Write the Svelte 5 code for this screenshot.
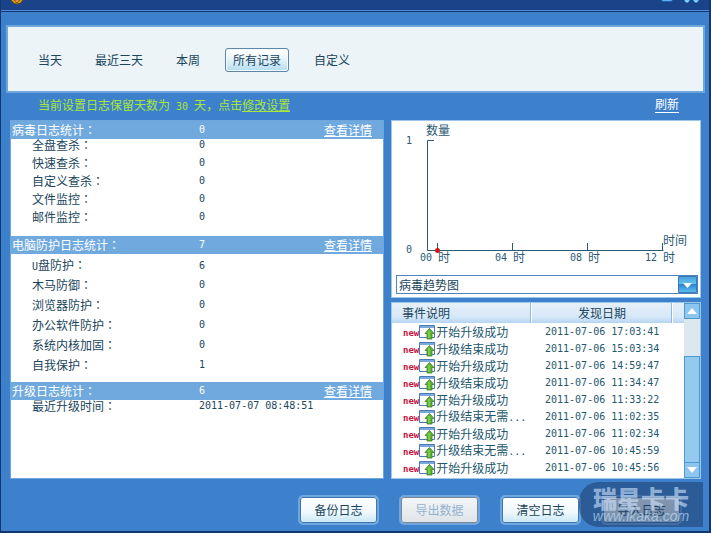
<script>
  const tabs = ['当天', '最近三天', '本周', '所有记录', '自定义'];
  let active = $state('所有记录');
  let chartType = $state('病毒趋势图');

  const sections = [
    {
      title: '病毒日志统计', total: '0', kind: 'virus',
      rows: [['全盘查杀', '0'], ['快速查杀', '0'], ['自定义查杀', '0'], ['文件监控', '0'], ['邮件监控', '0']]
    },
    {
      title: '电脑防护日志统计', total: '7', kind: 'guard',
      rows: [['U盘防护', '6'], ['木马防御', '0'], ['浏览器防护', '0'], ['办公软件防护', '0'], ['系统内核加固', '0'], ['自我保护', '1']]
    },
    {
      title: '升级日志统计', total: '6', kind: 'upgrade',
      rows: [['最近升级时间', '2011-07-07 08:48:51']]
    }
  ];

  const events = [
    ['开始升级成功', '17:03:41'],
    ['升级结束成功', '15:03:34'],
    ['开始升级成功', '14:59:47'],
    ['升级结束成功', '11:34:47'],
    ['开始升级成功', '11:33:22'],
    ['升级结束无需...', '11:02:35'],
    ['开始升级成功', '11:02:34'],
    ['升级结束无需...', '10:45:59'],
    ['开始升级成功', '10:45:56']
  ];

  const ticks = [
    { x: 45, label: '00' },
    { x: 120, label: '04' },
    { x: 195, label: '08' },
    { x: 270, label: '12' }
  ];

  const actions = [
    { label: '备份日志' },
    { label: '导出数据', disabled: true },
    { label: '清空日志' },
    { label: '导入日志' }
  ];

  // Splits a string into half-width and full-width runs.
  const runs = (s) => s.match(/[\x20-\x7e]+|[^\x20-\x7e]+/g) ?? [];
</script>

{#snippet mixed(s)}{#each runs(s) as r}{#if /^[\x20-\x7e]/.test(r)}<span class="half">{r}</span>{:else}{r}{/if}{/each}{/snippet}

<div class="window">
  <header class="titlebar">
    <svg class="badge" width="14" height="10" viewBox="0 0 14 10" aria-hidden="true">
      <circle cx="7" cy="-2" r="6" fill="#d99a1c" stroke="#6b4a10" />
      <path d="M4 0l2 1.500M10 0l-2 1.500M6 2.500h2" stroke="#7a5310" fill="none" />
    </svg>
    <svg class="controls" width="40" height="10" viewBox="0 0 40 10" aria-hidden="true">
      <path d="M1 -1h10v2H1z" fill="#8be3ff" stroke="#2b7cd6" />
      <path d="M23 0h6l-2 2.500h-2zM32 0h6l-2 2.500h-2z" fill="#8be3ff" stroke="#2b7cd6" stroke-width=".5" />
    </svg>
  </header>

  <nav class="tabs" aria-label="时间范围">
    {#each tabs as t}
      <button class="tab" class:active={t === active} onclick={() => (active = t)}>{t}</button>
    {/each}
  </nav>

  <div class="notice">
    <p>当前设置日志保留天数为<span class="half">{' 30 '}</span>天<span class="comma">，</span>点击<a href="#settings">修改设置</a></p>
    <a class="refresh" href="#refresh">刷新</a>
  </div>

  <main>
    <section class="stats">
      {#each sections as s}
        <div class="head">
          <h2>{s.title}<span class="colon">：</span></h2>
          <span class="half">{s.total}</span>
          <a href="#{s.kind}">查看详情</a>
        </div>
        <dl class={s.kind}>
          {#each s.rows as [name, value]}
            <div>
              <dt>{@render mixed(name)}<span class="colon">：</span></dt>
              <dd class="half">{value}</dd>
            </div>
          {/each}
        </dl>
      {/each}
    </section>

    <div class="side">
      <section class="trend">
        <svg class="chart" viewBox="0 0 308 154" preserveAspectRatio="xMinYMin meet">
          <path class="axis" d="M42 19.500h-6.500v110h236" />
          {#each ticks as t}
            <path class="axis" d="M{t.x}.5 129v-7" />
            <text class="num" x={t.x - 17} y="140">{t.label}</text>
            <text x={t.x + 1} y="141">时</text>
          {/each}
          <text x="34" y="14">数量</text>
          <text x="271" y="124">时间</text>
          <text class="num" x="14" y="23">1</text>
          <text class="num" x="14" y="132">0</text>
          <circle cx="45.500" cy="129.500" r="2.500" fill="#d01515" />
        </svg>
        <div class="picker">
          <select aria-label="趋势图类型" bind:value={chartType}>
            <option>病毒趋势图</option>
          </select>
          <svg class="drop" viewBox="0 0 19 17" aria-hidden="true">
            <defs>
              <linearGradient id="dropfill" x2="0" y2="1">
                <stop offset="0" stop-color="#4a9fdc" />
                <stop offset=".5" stop-color="#62c4ee" />
                <stop offset=".5" stop-color="#2f83cf" />
                <stop offset="1" stop-color="#5ec3ef" />
              </linearGradient>
            </defs>
            <path d="M.5.5h18v16H.5z" fill="url(#dropfill)" stroke="#3a78bb" />
            <path d="M5 7h9l-4.500 5z" fill="#fff" />
          </svg>
        </div>
      </section>

      <section class="events">
        <table>
          <thead>
            <tr><th>事件说明</th><th>发现日期</th><th aria-label="其他"></th></tr>
          </thead>
          <tbody>
            {#each events as [title, time]}
              <tr>
                <td>
                  <div class="event">
                    <b>new</b>
                    <svg width="16" height="16" viewBox="0 0 16 16" aria-hidden="true">
                      <path d="M.5 1.500h15v12H.5z" fill="#fff" stroke="#4c79b4" />
                      <path d="M1 2h14v2H1z" fill="#79a8dd" />
                      <path d="M10.500 4.500L15 9.500h-2v5.500H8V9.500H6z" fill="#5cb32e" stroke="#3b7f2a" stroke-width=".8" />
                      <path d="M10 7v7" stroke="#9be069" />
                    </svg>
                    <span>{@render mixed(title)}</span>
                  </div>
                </td>
                <td class="half">2011-07-06 {time}</td>
                <td></td>
              </tr>
            {/each}
          </tbody>
        </table>
        <div class="scroll">
          <button aria-label="向上滚动"><svg width="10" height="6" viewBox="0 0 10 6"><path d="M0 6l5-6 5 6z" fill="#fff" /></svg></button>
          <div class="track"><div class="thumb"></div></div>
          <button aria-label="向下滚动"><svg width="10" height="6" viewBox="0 0 10 6"><path d="M0 0l5 6 5-6z" fill="#fff" /></svg></button>
        </div>
      </section>
    </div>
  </main>

  <footer>
    {#each actions as a}
      <button class="action" disabled={a.disabled}>{a.label}</button>
    {/each}
    <div class="watermark">
      <strong>瑞星卡卡</strong>
      <em>www.ikaka.com</em>
    </div>
  </footer>
</div>

<style>
  :global(body) { background: #3d80cb; }
  .window, .window :is(button, select) {
    font-family: "Noto Sans CJK SC", sans-serif;
    font-size: 12px;
    line-height: 12px;
    color: #1a455c;
  }
  .window {
    box-sizing: border-box;
    min-height: 100vh;
    display: flex;
    flex-direction: column;
    background: #3d80cb;
    border: solid #12366f;
    border-width: 0 2px 2px 1px;
  }
  .half { font-family: "DejaVu Sans Mono", monospace; font-size: 10px; line-height: 10px; white-space: pre; }
  .colon { font-family: "Noto Sans CJK JP", sans-serif; }
  h2, p, dl, dd { margin: 0; }
  a { color: inherit; }
  button { cursor: pointer; }

  .titlebar {
    height: 10px;
    display: flex;
    justify-content: space-between;
    padding: 0 8px 0 9px;
    background: #1b4389;
    border-bottom: 1px solid #4d8bd8;
    box-shadow: 0 1px #12366f;
  }
  .badge, .controls { display: block; }

  .tabs {
    display: flex;
    align-items: center;
    gap: 17px;
    height: 64px;
    margin: 14px 4px 0 5px;
    padding: 2px 22px 0;
    box-sizing: content-box;
    height: 62px;
    background: #ecf4f8;
    border: 2px solid #6fa6db;
  }
  .tab {
    height: 24px;
    padding: 0 7px;
    border: 1px solid transparent;
    border-radius: 3px;
    background: none;
  }
  .tab.active {
    border-color: #5c87a9;
    background: linear-gradient(#fff 10%, #e3f2fa 50%, #b4dcf2);
    box-shadow: inset 0 0 0 1px #f4fbff;
  }

  .notice {
    display: flex;
    justify-content: space-between;
    height: 27px;
    padding: 0 30px 0 37px;
    color: #a9e63a;
  }
  .notice p { padding-top: 6px; }
  .notice p a { display: inline-block; text-decoration: none; border-bottom: 1px solid; }
  .refresh {
    align-self: flex-start;
    margin-top: 5px;
    padding-bottom: 2px;
    color: #fff;
    text-decoration: none;
    border-bottom: 1px solid;
  }

  main {
    flex: 1;
    display: grid;
    grid-template-columns: 374fr 310fr;
    gap: 7px;
    padding: 0 8px 0 9px;
  }
  .stats { background: #fff; border: 1px solid #6fa6db; }
  .head, dl div {
    display: grid;
    grid-template-columns: 167px 1fr auto;
    align-items: center;
  }
  dl div { height: 12px; }
  .head {
    height: 18px;
    grid-template-columns: 188px 1fr auto;
    padding-right: 11px;
    background: #70a9de;
    color: #fff;
  }
  h2 { padding-left: 1px; font-size: 12px; font-weight: 400; line-height: 14px; }
  .head a { text-decoration: none; border-bottom: 1px solid; }
  dl { display: flex; flex-direction: column; gap: 6px; padding: 0 0 13px 21px; }
  dl.guard { gap: 8px; padding-top: 5px; padding-bottom: 11px; }

  .side { display: flex; flex-direction: column; gap: 4px; min-width: 0; }
  .trend { background: #fff; border: 1px solid #9cc6ea; }
  .chart { display: block; width: 100%; height: 154px; }
  .chart text { font-size: 12px; fill: #2a5a74; }
  .chart .num { font-family: "DejaVu Sans Mono", monospace; font-size: 10px; }
  .axis { fill: none; stroke: #2a5a74; }
  .picker {
    position: relative;
    margin: 0 2px 3px 4px;
  }
  .picker select {
    display: block;
    appearance: none;
    width: 100%;
    height: 19px;
    padding: 0 20px 0 2px;
    background: #fff;
    border: 1px solid #4a86bd;
    border-radius: 0;
  }
  .drop {
    position: absolute;
    top: 1px;
    right: 1px;
    width: 19px;
    height: 17px;
    pointer-events: none;
  }

  .events {
    flex: 1;
    display: flex;
    background: #fff;
    border: 1px solid #9cc6ea;
  }
  table { flex: 1; align-self: flex-start; border-collapse: separate; border-spacing: 0; table-layout: fixed; }
  th {
    box-sizing: border-box;
    height: 20px;
    padding: 0;
    font-weight: 400;
    background: linear-gradient(#e6eff8, #d6e8f8 70%, #b5d5f3);
    border-right: 1px solid #fff;
    box-shadow: inset -1px 0 #8fb9df;
  }
  th:nth-child(1) { width: 140px; padding-left: 10px; text-align: left; }
  th:nth-child(2) { width: 141px; }
  th:nth-child(3) { border: 0; box-shadow: none; }
  td { height: 17px; padding: 0; color: #24586f; }
  td.half { padding-left: 13px; }
  .event { display: flex; align-items: center; height: 17px; padding-left: 11px; }
  .event b {
    padding-top: 2px;
    font: bold 9px "DejaVu Sans Mono", monospace;
    color: #c4143c;
  }
  .event span { white-space: nowrap; }
  .event svg { flex: none; margin-right: 1px; }

  .scroll { display: flex; flex-direction: column; width: 16px; }
  .scroll button {
    display: grid;
    place-items: center;
    height: 16px;
    padding: 0;
    background: #8cc6ec;
    border: 1px solid #4e9ad0;
  }
  .track { flex: 1; display: flex; flex-direction: column; justify-content: flex-end; background: #dde7ef; }
  .thumb { height: 74%; box-sizing: border-box; background: #93caee; border: 1px solid #4e9ad0; border-bottom: 0; }

  footer {
    position: relative;
    display: flex;
    justify-content: flex-end;
    gap: 20px;
    padding: 16px 27px 6px;
  }
  .action {
    width: 81px;
    height: 30px;
    padding: 0;
    border: 2px solid #6ea7e0;
    border-radius: 5px;
    background: linear-gradient(#fff, #eff8fc 60%, #c5e5f4);
    box-shadow: inset 0 0 0 1px #3f76ab;
  }
  .action:disabled {
    color: #94b2cf;
    background: linear-gradient(#f4f6f8, #dfe3e8);
    box-shadow: inset 0 0 0 1px #7b8694;
  }
  .watermark {
    position: absolute;
    right: 6px;
    bottom: 4px;
    display: flex;
    flex-direction: column;
    align-items: center;
    box-sizing: border-box;
    width: 124px;
    height: 45px;
    padding-top: 4px;
    border-radius: 20px 0 0 20px;
    background: rgba(29, 62, 112, .55);
    color: rgba(210, 230, 255, .6);
    pointer-events: none;
  }
  .watermark strong { font-size: 24px; line-height: 23px; font-weight: 900; }
  .watermark em { font: italic 14px/14px "Liberation Sans", sans-serif; }
</style>
